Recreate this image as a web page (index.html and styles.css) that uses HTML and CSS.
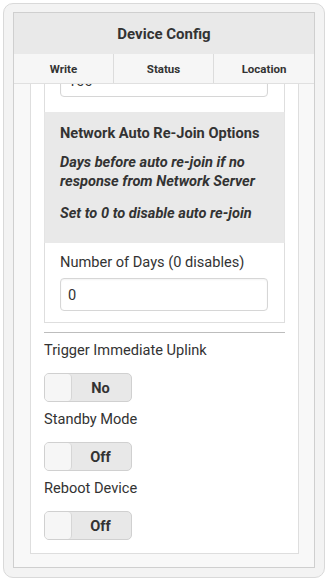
FILE: index.html
```html
<!DOCTYPE html>
<html>
<head>
<meta charset="utf-8">
<link rel="stylesheet" href="styles.css">
</head>
<body>
<div class="frame">
  <div class="panel">
    <div class="header">Device Config</div>
    <div class="tabs">
      <div class="tab">Write</div>
      <div class="tab">Status</div>
      <div class="tab">Location</div>
    </div>
    <div class="content">
      <div class="box">
        <div class="sec sec-top">
          <div class="input">100</div>
        </div>
        <div class="sec sec-gray">
          <h3>Network Auto Re-Join Options</h3>
          <p>Days before auto re-join if no response from Network Server</p>
          <p class="p2">Set to 0 to disable auto re-join</p>
        </div>
        <div class="sec sec-bottom">
          <div class="lbl">Number of Days (0 disables)</div>
          <div class="input">0</div>
        </div>
        <div class="rule"></div>
        <div class="field">
          <div class="lbl">Trigger Immediate Uplink</div>
          <div class="toggle"><span class="knob"></span><span class="tval">No</span></div>
        </div>
        <div class="field">
          <div class="lbl">Standby Mode</div>
          <div class="toggle"><span class="knob"></span><span class="tval">Off</span></div>
        </div>
        <div class="field">
          <div class="lbl">Reboot Device</div>
          <div class="toggle"><span class="knob"></span><span class="tval">Off</span></div>
        </div>
      </div>
    </div>
  </div>
</div>
</body>
</html>
```

FILE: styles.css
```css
* { box-sizing: border-box; }
html, body { margin: 0; padding: 0; background: #fff; }
body {
  font-family: Roboto, "Liberation Sans", sans-serif;
  color: #333;
  width: 330px;
  height: 582px;
  overflow: hidden;
}
.frame {
  margin: 3px 5px 0 3px;
  height: 575px;
  border: 1px solid #d9d9d9;
  border-radius: 10px;
  background: #f3f3f3;
  padding: 8px 9px 9px 9px;
}
.panel {
  height: 556px;
  border: 1px solid #cfcfcf;
  background: #f8f8f8;
  display: flex;
  flex-direction: column;
}
.header {
  height: 41px;
  background: #e9e9e9;
  font-weight: 700;
  font-size: 15px;
  display: flex;
  align-items: center;
  justify-content: center;
}
.tabs {
  height: 30px;
  display: grid;
  grid-template-columns: 100px 100px 1fr;
  background: #f6f6f6;
  border-bottom: 1px solid #e0e0e0;
}
.tab {
  display: flex;
  align-items: center;
  justify-content: center;
  font-weight: 700;
  font-size: 11.5px;
  border-right: 1px solid #dcdcdc;
}
.tab:last-child { border-right: none; }
.content {
  flex: 1;
  overflow: hidden;
  padding: 0 15px 0 16px;
}
.box {
  margin-top: -20px;
  background: #fff;
  border: 1px solid #dedede;
  border-top: none;
  padding: 0 13px 13px 13px;
}
.sec {
  border-left: 1px solid #dedede;
  border-right: 1px solid #dedede;
}
.sec-top { padding: 0 16px 15px 15px; background: #fff; }
.sec-gray {
  background: #e9e9e9;
  padding: 11px 15px 20px 15px;
  border-color: #e4e4e4;
}
.sec-gray h3 {
  margin: 0;
  font-size: 14.6px;
  line-height: 20px;
  font-weight: 700;
}
.sec-gray p {
  margin: 10px 0 0 0;
  font-size: 14.6px;
  line-height: 19px;
  font-style: italic;
  font-weight: 700;
}
.sec-gray p.p2 { margin-top: 13px; }
.sec-bottom {
  padding: 9px 16px 11px 15px;
  border-bottom: 1px solid #dedede;
  background: #fff;
}
.sec-bottom .lbl { margin-bottom: 6px; }
.lbl {
  font-size: 14.6px;
  line-height: 20px;
}
.input {
  height: 33px;
  border: 1px solid #d6d6d6;
  border-radius: 4px;
  background: #fff;
  font-size: 14.6px;
  display: flex;
  align-items: center;
  padding-left: 7px;
  box-shadow: inset 0 1px 2px rgba(0,0,0,0.05);
}
.rule {
  height: 1px;
  background: #bdbdbd;
  margin: 9px 0 7px 0;
}
.field .lbl { margin-bottom: 13px; }
.field { margin-bottom: 7px; }
.field:last-child { margin-bottom: 0; }
.toggle {
  width: 88px;
  height: 29px;
  border: 1px solid #d0d0d0;
  border-radius: 5px;
  background: #e8e8e8;
  display: flex;
  align-items: stretch;
}
.knob {
  width: 27px;
  background: #f6f6f6;
  border-right: 1px solid #d6d6d6;
  border-radius: 4px;
}
.tval {
  flex: 1;
  display: flex;
  align-items: center;
  justify-content: center;
  font-weight: 700;
  font-size: 14.6px;
  padding-right: 2px;
}
```
